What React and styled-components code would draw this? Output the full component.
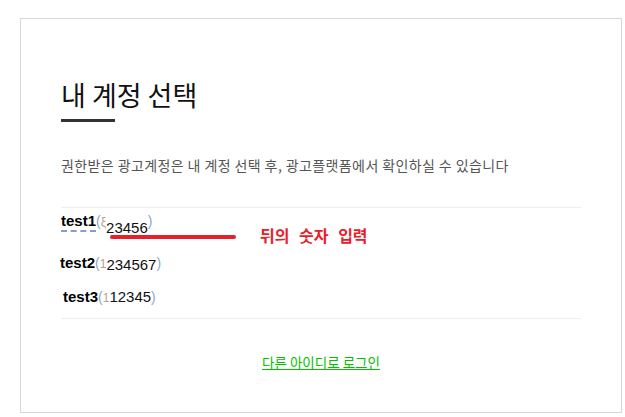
import React from 'react';
import styled, { createGlobalStyle } from 'styled-components';

const GlobalStyle = createGlobalStyle`
    body {
        margin: 0;
        background: #fff;
        font-family: "Noto Sans CJK KR", "Noto Sans", sans-serif;
    }
`;

const accounts = [
    { name: 'test1', id: '23456', pre: 'ξ', top: 4, left: 0, drop: 7 },
    { name: 'test2', id: '234567', pre: '1', top: 22, left: -1, drop: 2 },
    { name: 'test3', id: '12345', pre: '1', top: 14, left: 2, drop: 0 },
];

const App = () => {
    return (
        <>
            <GlobalStyle />
            <Box>
                <Title>내 계정 선택</Title>
                <TitleBar />
                <Desc>권한받은 광고계정은 내 계정 선택 후, 광고플랫폼에서 확인하실 수 있습니다</Desc>
                <List>
                    {accounts.map((a, i) => (
                        <Row key={a.name} $top={a.top} $left={a.left}>
                            <Name $first={i === 0}>{a.name}</Name>
                            <Paren>(</Paren>
                            <Faint>{a.pre}</Faint>
                            <Num $drop={a.drop}>{a.id}</Num>
                            <Paren>)</Paren>
                        </Row>
                    ))}
                    <Marker />
                    <Note>뒤의 숫자 입력</Note>
                </List>
                <LinkWrap>
                    <OtherLink href="#">다른 아이디로 로그인</OtherLink>
                </LinkWrap>
            </Box>
        </>
    );
};

export default App;

const Box = styled.div`
    box-sizing: border-box;
    margin: 18px 0 0 20px;
    width: 602px;
    height: 395px;
    border: 1px solid #d3d9e2;
    padding: 56px 40px 0 40px;
`;

const Title = styled.h1`
    margin: 0;
    font-size: 27px;
    font-weight: 400;
    line-height: 40px;
    color: #111;
`;

const TitleBar = styled.div`
    width: 54px;
    height: 3px;
    background: #333;
    margin-top: 4px;
`;

const Desc = styled.p`
    margin: 33px 0 0;
    font-size: 14px;
    letter-spacing: 0.4px;
    line-height: 20px;
    color: #555;
`;

const List = styled.div`
    position: relative;
    margin-top: 32px;
    border-top: 1px solid #eee;
    border-bottom: 1px solid #eee;
    height: 110px;
`;

const Row = styled.div`
    display: flex;
    align-items: baseline;
    margin-top: ${p => p.$top}px;
    margin-left: ${p => p.$left}px;
    height: 20px;
    font-family: "Liberation Sans", "Noto Sans CJK KR", sans-serif;
`;

const Name = styled.span`
    font-weight: 700;
    font-size: 15px;
    color: #000;
    ${p => p.$first && `
        text-decoration: underline dashed #5b7fb8;
        text-underline-offset: 5px;
    `}
`;

const Paren = styled.span`
    font-size: 14px;
    color: #8ea6c8;
`;

const Faint = styled.span`
    font-size: 12px;
    color: #b9a08c;
`;

const Num = styled.span`
    font-size: 15px;
    color: #111;
    position: relative;
    top: ${p => p.$drop}px;
`;

const Marker = styled.div`
    position: absolute;
    left: 49px;
    top: 27px;
    width: 126px;
    height: 4px;
    border-radius: 2px;
    background: #e8202a;
`;

const Note = styled.div`
    position: absolute;
    left: 199px;
    top: 15px;
    font-size: 16px;
    font-weight: 700;
    word-spacing: 6px;
    color: #e8202a;
`;

const LinkWrap = styled.div`
    text-align: center;
    margin-top: 30px;
`;

const OtherLink = styled.a`
    font-size: 13.5px;
    color: #00c000;
    text-decoration: underline;
`;
